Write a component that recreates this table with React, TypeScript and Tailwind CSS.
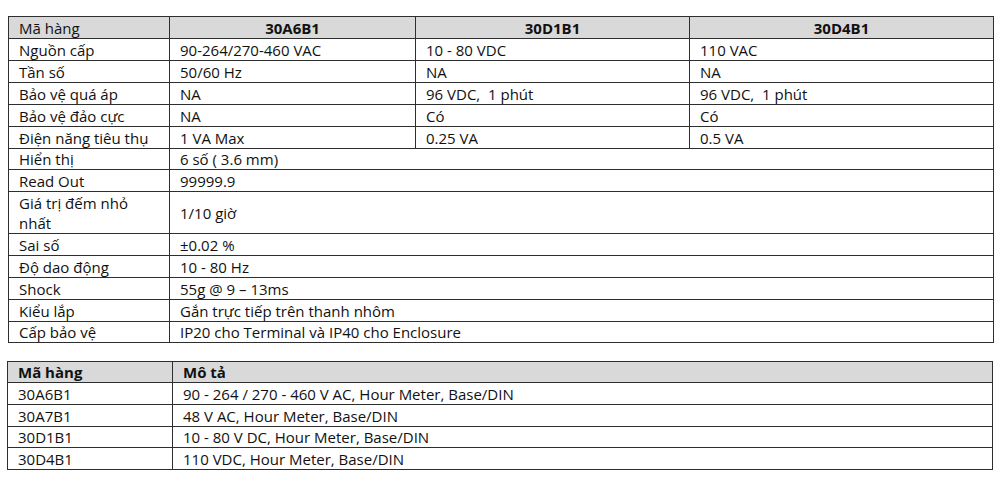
import React from "react";

const specs: { label: React.ReactNode; values: string[]; h: string }[] = [
  { label: "Nguồn cấp", values: ["90-264/270-460 VAC", "10 - 80 VDC", "110 VAC"], h: "h-[22px]" },
  { label: "Tần số", values: ["50/60 Hz", "NA", "NA"], h: "h-[22px]" },
  { label: "Bảo vệ quá áp", values: ["NA", "96 VDC,  1 phút", "96 VDC,  1 phút"], h: "h-[22px]" },
  { label: "Bảo vệ đảo cực", values: ["NA", "Có", "Có"], h: "h-[22px]" },
  { label: "Điện năng tiêu thụ", values: ["1 VA Max", "0.25 VA", "0.5 VA"], h: "h-[22px]" },
  { label: "Hiển thị", values: ["6 số ( 3.6 mm)"], h: "h-[21px]" },
  { label: "Read Out", values: ["99999.9"], h: "h-[22px]" },
  {
    label: (
      <>
        Giá trị đếm nhỏ
        <br />
        nhất
      </>
    ),
    values: ["1/10 giờ"],
    h: "h-[42px]",
  },
  { label: "Sai số", values: ["±0.02 %"], h: "h-[22px]" },
  { label: "Độ dao động", values: ["10 - 80 Hz"], h: "h-[22px]" },
  { label: "Shock", values: ["55g @ 9 – 13ms"], h: "h-[22px]" },
  { label: "Kiểu lắp", values: ["Gắn trực tiếp trên thanh nhôm"], h: "h-[22px]" },
  { label: "Cấp bảo vệ", values: ["IP20 cho Terminal và IP40 cho Enclosure"], h: "h-[21px]" },
];

const models = [
  ["30A6B1", "90 - 264 / 270 - 460 V AC, Hour Meter, Base/DIN", "h-[22px]"],
  ["30A7B1", "48 V AC, Hour Meter, Base/DIN", "h-[22px]"],
  ["30D1B1", "10 - 80 V DC, Hour Meter, Base/DIN", "h-[21px]"],
  ["30D4B1", "110 VDC, Hour Meter, Base/DIN", "h-[22px]"],
];

const cell = "border border-[#2e2e2e] px-[10px] py-0 align-middle";

export default function App() {
  return (
    <div
      className="w-[1000px] h-[480px] bg-white pl-[8px] pt-[16px] text-[#111] text-[15px] leading-[20px]"
      style={{ fontFamily: '"Open Sans", "Noto Sans", sans-serif' }}
    >
      <table className="w-[985px] border-collapse table-fixed">
        <colgroup>
          <col className="w-[161px]" />
          <col className="w-[246px]" />
          <col className="w-[274px]" />
          <col className="w-[304px]" />
        </colgroup>
        <thead>
          <tr className="h-[22px] bg-[#d9d9d9]">
            <td className={cell}>Mã hàng</td>
            <td className={`${cell} text-center font-bold`}>30A6B1</td>
            <td className={`${cell} text-center font-bold`}>30D1B1</td>
            <td className={`${cell} text-center font-bold`}>30D4B1</td>
          </tr>
        </thead>
        <tbody>
          {specs.map((row, i) => (
            <tr key={i} className={row.h}>
              <td className={cell}>{row.label}</td>
              {row.values.length === 1 ? (
                <td className={cell} colSpan={3}>
                  {row.values[0]}
                </td>
              ) : (
                row.values.map((v, j) => (
                  <td key={j} className={`${cell} whitespace-pre`}>
                    {v}
                  </td>
                ))
              )}
            </tr>
          ))}
        </tbody>
      </table>

      <table className="mt-[18px] w-[986px] -ml-px border-collapse table-fixed">
        <colgroup>
          <col className="w-[165px]" />
          <col />
        </colgroup>
        <thead>
          <tr className="h-[21px] bg-[#d9d9d9] font-bold">
            <td className={cell}>Mã hàng</td>
            <td className={cell}>Mô tả</td>
          </tr>
        </thead>
        <tbody>
          {models.map(([code, desc, h]) => (
            <tr key={code} className={h}>
              <td className={cell}>{code}</td>
              <td className={cell}>{desc}</td>
            </tr>
          ))}
        </tbody>
      </table>
    </div>
  );
}
